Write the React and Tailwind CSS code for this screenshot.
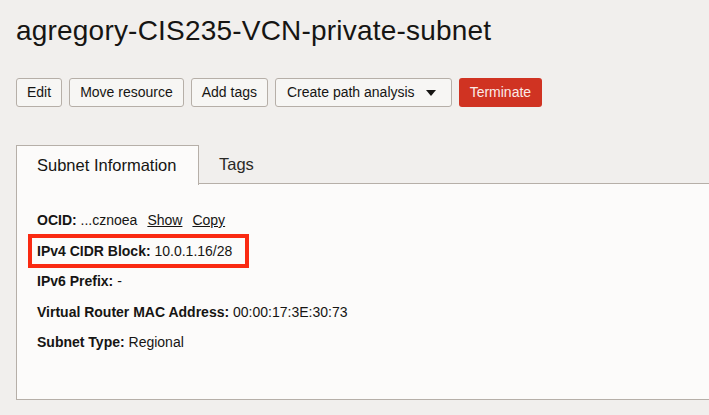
import { useState } from 'react'

const ACTIONS = ['Edit', 'Move resource', 'Add tags']

function Field({ label, children }) {
  return (
    <div className="leading-[16px]">
      <span className="font-bold">{label}</span> {children}
    </div>
  )
}

export default function App() {
  const [tab, setTab] = useState('info')

  return (
    <div className="min-h-screen bg-[#f1efed] text-[#161513] font-['Liberation_Sans',Arial,sans-serif] pt-[15px] pb-[15px]">
      {/* header */}
      <h1 className="pl-4 text-[28px] tracking-[0.2px] leading-[32px] text-[#161513]">agregory-CIS235-VCN-private-subnet</h1>

      {/* action buttons */}
      <div className="flex gap-[7px] pl-4 mt-[31px]">
        {ACTIONS.map((a) => (
          <button
            key={a}
            className="h-[29px] px-[10px] rounded-[3px] border border-[#b6afa8] bg-[#f7f6f4] text-[14px] text-[#161513]"
          >
            {a}
          </button>
        ))}
        <button className="h-[29px] pl-[11px] pr-[15px] rounded-[3px] border border-[#b6afa8] bg-[#f7f6f4] text-[14px] flex items-center gap-[11px]">
          Create path analysis
          <svg width="10" height="6" viewBox="0 0 10 6">
            <path d="M0 0h10L5 6z" fill="#161513" />
          </svg>
        </button>
        <button className="h-[29px] px-[11px] rounded-[3px] bg-[#d03322] text-[14px] text-[#fbeae7]">Terminate</button>
      </div>

      {/* tabs */}
      <div className="ml-4 mt-[38px]">
        <div className="flex h-[39px]">
          <button
            onClick={() => setTab('info')}
            className="w-[183px] h-[40px] border border-b-0 border-[#b6afa8] bg-[#fcfbfa] text-[16.5px] text-left pl-[20px] relative z-10"
          >
            Subnet Information
          </button>
          <div className="flex-1 border-b border-[#b6afa8]">
            <button onClick={() => setTab('tags')} className="h-full pl-[20px] text-[16.5px] text-[#2a2926]">
              Tags
            </button>
          </div>
        </div>

        <div className="h-[216px] bg-[#fcfbfa] border-l border-b border-[#b6afa8] pl-[20px] pt-[28px] text-[14px] flex flex-col gap-[14.5px]">
          <Field label="OCID:">
            ...cznoea
            <a className="ml-[10px] underline">Show</a>
            <a className="ml-[10px] underline">Copy</a>
          </Field>
          <div className="relative">
            <Field label="IPv4 CIDR Block:">10.0.1.16/28</Field>
            <div className="absolute left-[-9px] top-[-9px] w-[221px] h-[34px] border-[4px] border-[#fa2a12]" />
          </div>
          <Field label="IPv6 Prefix:">-</Field>
          <Field label="Virtual Router MAC Address:">00:00:17:3E:30:73</Field>
          <Field label="Subnet Type:">Regional</Field>
        </div>
      </div>
    </div>
  )
}
